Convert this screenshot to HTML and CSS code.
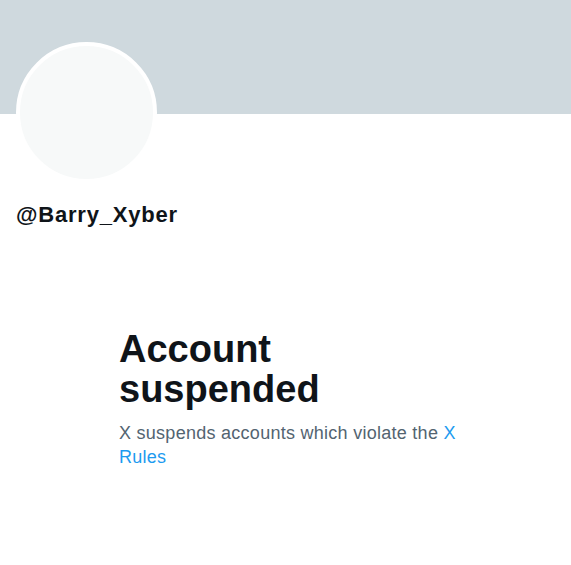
FILE: index.html
```html
<!DOCTYPE html>
<html lang="en">
<head>
<meta charset="utf-8">
<title>@Barry_Xyber</title>
<link rel="stylesheet" href="styles.css">
</head>
<body>
<div class="banner"></div>
<div class="profile">
  <div class="avatar"></div>
  <div class="handle">@Barry_Xyber</div>
</div>
<div class="notice">
  <div class="notice-box">
    <h1 class="title">Account suspended</h1>
    <p class="desc">X suspends accounts which violate the <a class="link" href="#">X Rules</a></p>
  </div>
</div>
</body>
</html>
```
FILE: styles.css
```css
html, body {
  margin: 0;
  padding: 0;
  background: #ffffff;
  font-family: "Liberation Sans", Arial, sans-serif;
}
.banner {
  height: 114px;
  background: #cfd9de;
}
.profile {
  padding: 0 16px;
}
.avatar {
  width: 133px;
  height: 133px;
  margin-top: -72px;
  border: 4px solid #ffffff;
  border-radius: 50%;
  background: #f7f9f9;
}
.handle {
  margin-top: 19px;
  font-size: 22px;
  line-height: 26px;
  font-weight: 700;
  letter-spacing: 0.8px;
  color: #0f1419;
}
.notice {
  display: flex;
  padding-left: 119px;
  padding-top: 101px;
}
.notice-box {
  width: 345px;
}
.title {
  margin: 0;
  font-size: 38px;
  line-height: 40px;
  font-weight: 700;
  color: #0f1419;
}
.desc {
  margin: 12px 0 0;
  font-size: 18px;
  line-height: 24px;
  letter-spacing: 0.27px;
  color: #536471;
}
.link {
  color: #1d9bf0;
  text-decoration: none;
}
```
